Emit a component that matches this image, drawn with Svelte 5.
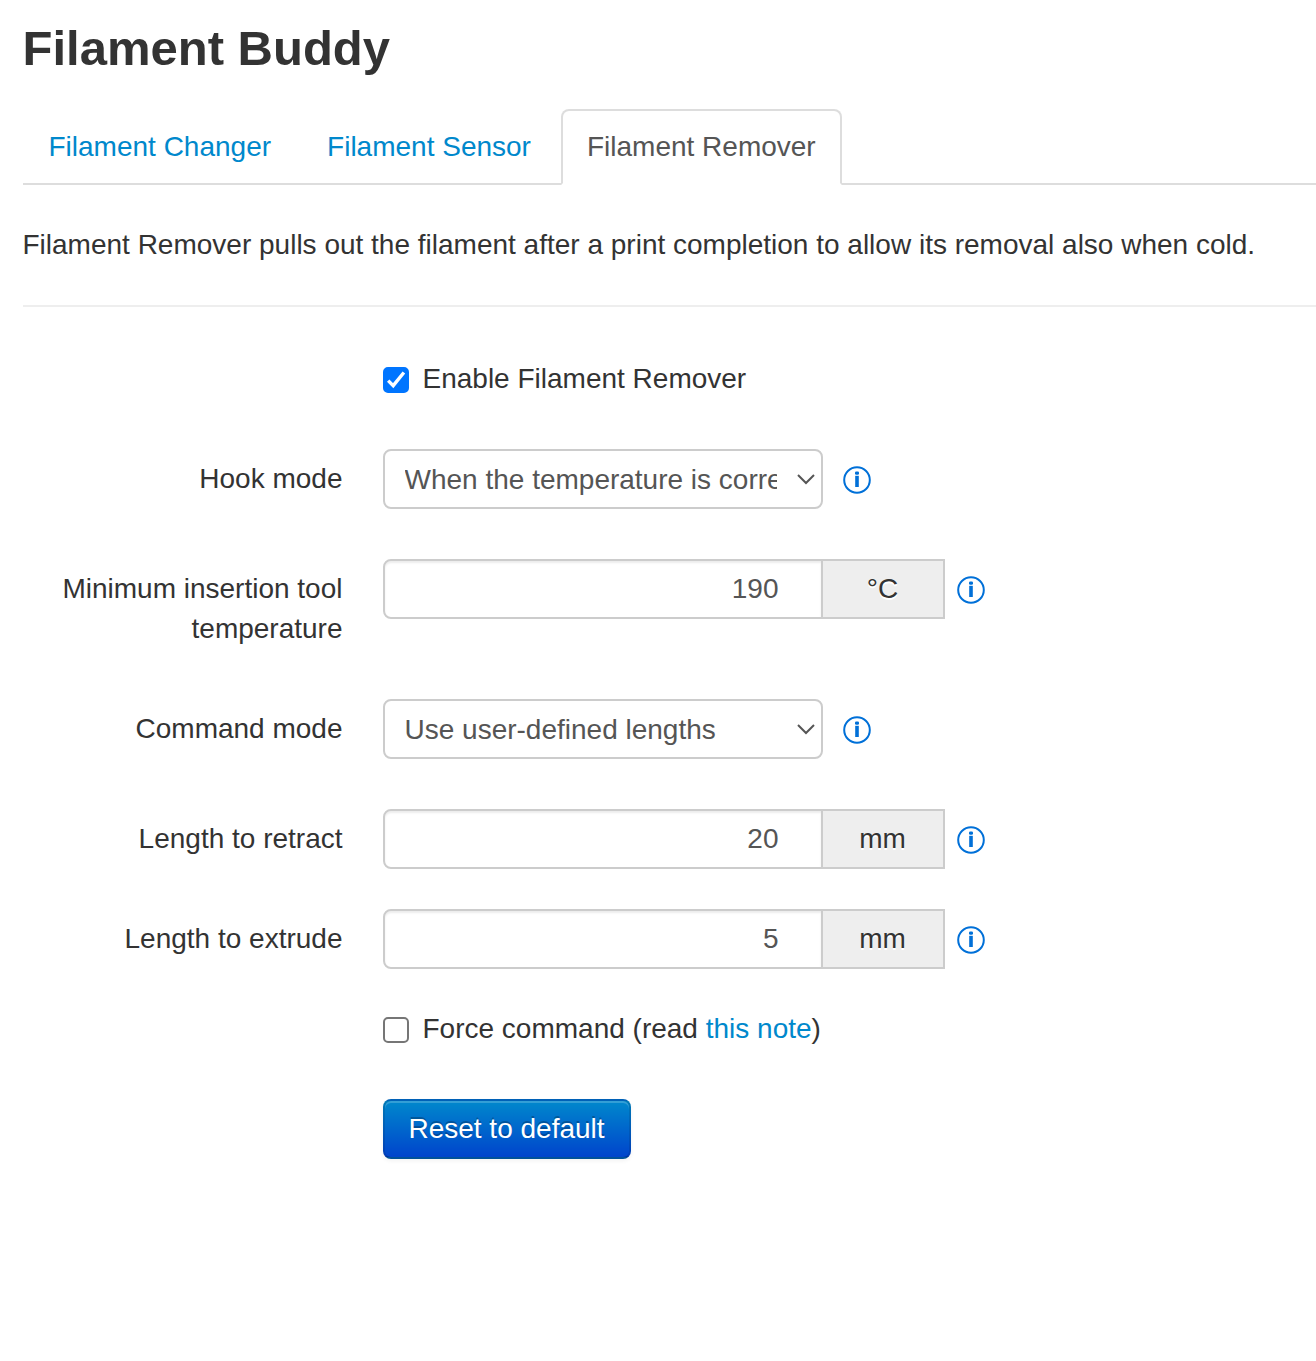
<script>
  const tabs = ['Filament Changer', 'Filament Sensor', 'Filament Remover'];
  let active = $state('Filament Remover');
  let enabled = $state(true);
  let force = $state(false);
  let temperature = $state('190');
  let retract = $state('20');
  let extrude = $state('5');
</script>

{#snippet info()}
  <svg class="info" viewBox="0 0 28 28" aria-hidden="true">
    <circle cx="14" cy="14" r="12.8" fill="none" stroke="currentColor" stroke-width="2" />
    <rect x="12" y="5.4" width="4" height="3.4" rx="1.3" fill="currentColor" />
    <path d="M12.2 9.8h3.6v11.2h-3.6z" fill="currentColor" />
  </svg>
{/snippet}

{#snippet chevron()}
  <svg class="chevron" viewBox="0 0 18 12" aria-hidden="true">
    <path d="M1 2l8 8 8-8" fill="none" stroke="currentColor" stroke-width="2" />
  </svg>
{/snippet}

{#snippet tick()}
  <svg class="tick" viewBox="0 0 26 26" aria-hidden="true">
    <path d="M5.2 13.6l5 5L20.9 5.5" fill="none" stroke="#fff" stroke-width="3.4" />
  </svg>
{/snippet}

<main>
  <h3>Filament Buddy</h3>

  <nav>
    {#each tabs as tab}
      <button class="tab" class:active={tab === active} onclick={() => (active = tab)}>{tab}</button>
    {/each}
  </nav>

  <p>Filament Remover pulls out the filament after a print completion to allow its removal also when cold.</p>
  <hr />

  <form onsubmit={(e) => e.preventDefault()}>
    <label class="check">
      <span class="box"><input type="checkbox" bind:checked={enabled} />{@render tick()}</span>
      <span>Enable Filament Remover</span>
    </label>

    <div class="row">
      <label for="hook">Hook mode</label>
      <div class="field">
        <div class="select">
          <select id="hook">
            <option>When the temperature is correct</option>
          </select>
          {@render chevron()}
        </div>
        {@render info()}
      </div>
    </div>

    <div class="row">
      <label for="temp">Minimum insertion tool temperature</label>
      <div class="field unit">
        <div class="group"><input id="temp" type="text" bind:value={temperature} /><span>°C</span></div>
        {@render info()}
      </div>
    </div>

    <div class="row">
      <label for="command">Command mode</label>
      <div class="field">
        <div class="select">
          <select id="command">
            <option>Use user-defined lengths</option>
          </select>
          {@render chevron()}
        </div>
        {@render info()}
      </div>
    </div>

    <div class="row tight">
      <label for="retract">Length to retract</label>
      <div class="field unit">
        <div class="group"><input id="retract" type="text" bind:value={retract} /><span>mm</span></div>
        {@render info()}
      </div>
    </div>

    <div class="row tight">
      <label for="extrude">Length to extrude</label>
      <div class="field unit">
        <div class="group"><input id="extrude" type="text" bind:value={extrude} /><span>mm</span></div>
        {@render info()}
      </div>
    </div>

    <label class="check">
      <span class="box"><input type="checkbox" bind:checked={force} />{@render tick()}</span>
      <span>Force command (read <a href="#note">this note</a>)</span>
    </label>

    <button class="primary">Reset to default</button>
  </form>
</main>

<style>
  :global(body) {
    margin: 0;
    background: #fff;
  }
  main {
    box-sizing: border-box;
    min-height: 1361px;
    padding: 8px 0 0 22.5px;
    overflow: hidden;
    color: #333;
    font: 28px/40px 'Liberation Sans', Arial, sans-serif;
  }
  h3 {
    margin: 0 0 21px;
    font-size: 49px;
    line-height: 80px;
  }
  nav {
    display: flex;
    gap: 4px;
    height: 74px;
    margin-bottom: 40px;
    border-bottom: 2px solid #ddd;
  }
  .tab {
    box-sizing: border-box;
    height: 76px;
    margin: 0;
    padding: 16px 24px;
    border: 2px solid transparent;
    border-radius: 8px 8px 0 0;
    background: transparent;
    color: #08c;
    font: inherit;
    white-space: nowrap;
  }
  .tab.active {
    border-color: #ddd #ddd transparent;
    background: #fff;
    color: #555;
  }
  p {
    margin: 0;
    white-space: nowrap;
  }
  hr {
    margin: 40px 0 52px;
    border: 0;
    border-top: 2px solid #eee;
  }
  .check {
    display: flex;
    align-items: center;
    gap: 14px;
    height: 40px;
    margin: 0 0 50px 360px;
  }
  .box {
    display: grid;
    margin-top: 2px;
  }
  .box > * {
    grid-area: 1 / 1;
    box-sizing: border-box;
    width: 26px;
    height: 26px;
    margin: 0;
  }
  .box input {
    appearance: none;
    border: 2px solid #767676;
    border-radius: 5px;
    background: #fff;
  }
  .box input:checked {
    border-color: #0075ff;
    background: #0075ff;
  }
  .tick {
    visibility: hidden;
    pointer-events: none;
  }
  .box input:checked + :global(.tick) {
    visibility: visible;
  }
  a {
    color: #08c;
    text-decoration: none;
  }
  .row {
    display: grid;
    grid-template-columns: 320px 1fr;
    column-gap: 40px;
    align-items: start;
    margin-bottom: 50px;
  }
  .row.tight {
    margin-bottom: 40px;
  }
  .row > label {
    padding-top: 10px;
    text-align: right;
  }
  .field {
    display: flex;
    align-items: center;
    gap: 20px;
    height: 60px;
  }
  .field.unit {
    gap: 12px;
  }
  .select {
    position: relative;
    width: 440px;
    height: 60px;
  }
  select,
  .group input {
    box-sizing: border-box;
    width: 440px;
    height: 60px;
    margin: 0;
    border: 2px solid #ccc;
    border-radius: 8px;
    outline: 0;
    background: #fff;
    color: #555;
    font: inherit;
  }
  select {
    appearance: none;
    padding: 2px 43.5px 0 20px;
  }
  .chevron {
    position: absolute;
    top: 24px;
    right: 8px;
    width: 18px;
    height: 12px;
    color: #555;
    pointer-events: none;
  }
  .group {
    display: flex;
  }
  .group input {
    padding: 0 42px 0 12px;
    border-radius: 8px 0 0 8px;
    box-shadow: inset 0 2px 2px rgba(0, 0, 0, 0.075);
    text-align: right;
  }
  .group span {
    box-sizing: border-box;
    width: 124px;
    height: 60px;
    margin-left: -2px;
    padding: 8px 0;
    border: 2px solid #ccc;
    background: #eee;
    text-align: center;
    text-shadow: 0 2px 0 #fff;
  }
  .info {
    flex: none;
    width: 28px;
    height: 28px;
    margin-top: 1px;
    color: #0070d8;
  }
  .primary {
    box-sizing: border-box;
    width: 248px;
    height: 60px;
    margin: 0 0 0 360px;
    padding: 8px 0;
    border: 2px solid;
    border-color: rgba(0, 0, 0, 0.1) rgba(0, 0, 0, 0.1) rgba(0, 0, 0, 0.25);
    border-radius: 8px;
    background: #006dcc linear-gradient(to bottom, #08c, #04c) repeat-x;
    box-shadow: inset 0 2px 0 rgba(255, 255, 255, 0.2), 0 2px 4px rgba(0, 0, 0, 0.05);
    color: #fff;
    font: inherit;
    text-shadow: 0 -2px 0 rgba(0, 0, 0, 0.25);
  }
</style>
